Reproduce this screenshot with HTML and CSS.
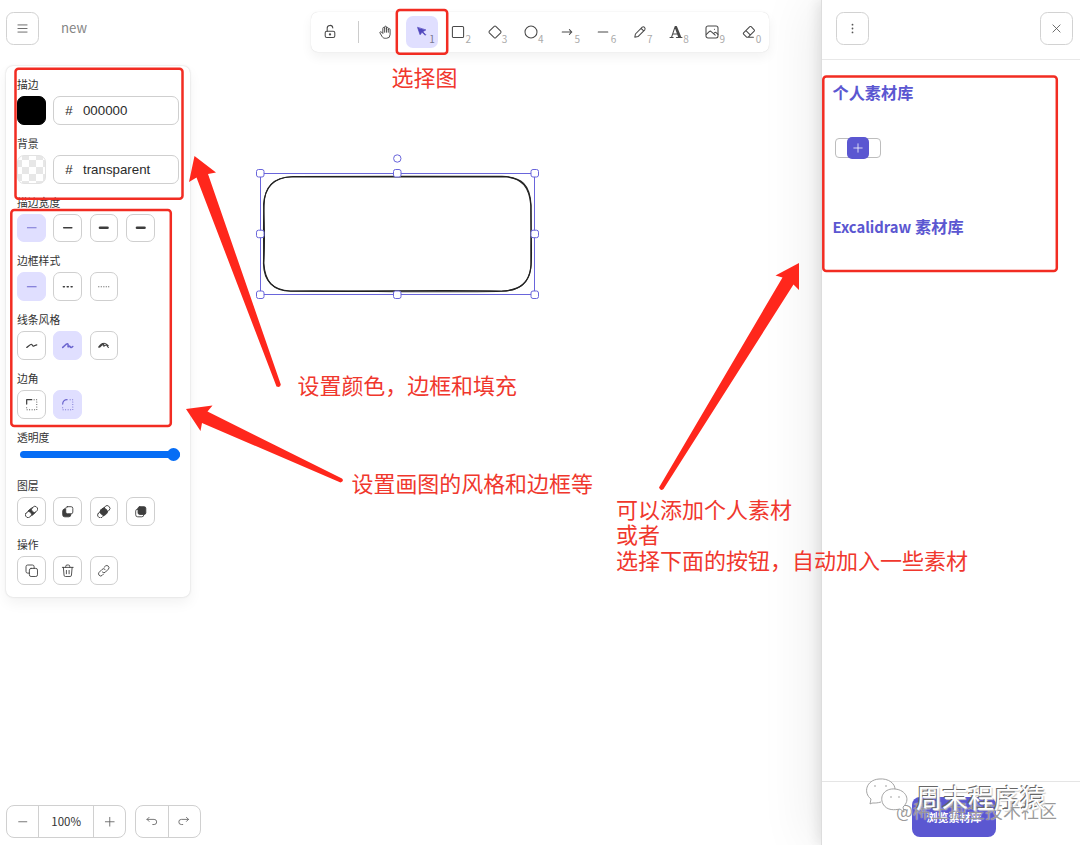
FILE: index.html
```html
<!DOCTYPE html>
<html lang="zh-CN">
<head>
<meta charset="utf-8">
<title>Excalidraw</title>
<link rel="stylesheet" href="styles.css">
</head>
<body>
<div class="app">
  <main class="board">
    <header class="topbar">
      <button class="icon-btn"><svg class="i" viewBox="0 0 20 20"><path d="M3 4.500h14M3 10h14M3 15.500h14"/></svg></button>
      <span class="doc-name">new</span>
      <nav class="toolbar">
        <button class="tool"><svg class="i" viewBox="0 0 20 20"><rect x="4" y="9" width="12" height="8" rx="2"/><path d="M6.500 9V5.500a3.500 3.500 0 0 1 7-.5"/><circle cx="10" cy="13" r=".8"/></svg></button>
        <i class="divider"></i>
        <button class="tool"><svg class="i hand" viewBox="0 0 24 24"><path d="M8 13V5.500a1.500 1.500 0 0 1 3 0V12M11 5.500v-2a1.500 1.500 0 1 1 3 0V12M14 5.500a1.500 1.500 0 0 1 3 0V12"/><path d="M17 7.500a1.500 1.500 0 0 1 3 0V16a6 6 0 0 1-6 6h-2c-2.500 0-4-1-5.300-3L3.300 13.200a1.500 1.500 0 0 1 2.500-1.600L8 14"/></svg></button>
        <button class="tool active"><svg class="i solid" viewBox="0 0 22 22"><path d="M3 3l4.500 13 3.500-4.500 6 5.500 1-1-5.500-5.500L17.500 7.500z"/></svg><small>1</small></button>
        <button class="tool"><svg class="i" viewBox="0 0 20 20"><rect x="3" y="3" width="14" height="14" rx="1.500"/></svg><small>2</small></button>
        <button class="tool"><svg class="i" viewBox="0 0 20 20"><path d="M9 2.900a1.500 1.500 0 0 1 2 0L17.100 9a1.500 1.500 0 0 1 0 2L11 17.100a1.500 1.500 0 0 1-2 0L2.900 11a1.500 1.500 0 0 1 0-2z"/></svg><small>3</small></button>
        <button class="tool"><svg class="i" viewBox="0 0 20 20"><circle cx="10" cy="10" r="7.500"/></svg><small>4</small></button>
        <button class="tool"><svg class="i" viewBox="0 0 20 20"><path d="M4 10h12M13 7l3 3-3 3"/></svg><small>5</small></button>
        <button class="tool"><svg class="i" viewBox="0 0 20 20"><path d="M4 10h12"/></svg><small>6</small></button>
        <button class="tool"><svg class="i" viewBox="0 0 20 20"><path d="M3.500 16.500l.8-4 8.500-8.500c2-1.500 4.500 1 3.200 3.200L7.500 15.700zM11.500 5.500l3 3"/></svg><small>7</small></button>
        <button class="tool"><svg class="i" viewBox="0 0 20 20"><path d="M2.500 17h4M10.500 17h7M4.500 16.500L9 3h1.500l5.500 13.500M6.500 12.500h6M9 4l4.500 12.500M10.300 4l4.500 12.500"/></svg><small>8</small></button>
        <button class="tool"><svg class="i" viewBox="0 0 20 20"><rect x="2.500" y="2.500" width="15" height="15" rx="2.500"/><path d="M3 13l3.500-3.500c1-.8 1.800-.8 2.500 0l5 4.500M12 12l1-1c1-.8 1.800-.8 2.500 0l2 2M13 6.500h.2"/></svg><small>9</small></button>
        <button class="tool"><svg class="i" viewBox="0 0 20 20"><path d="M15.500 16.500H7L3.200 12.800a1.200 1.200 0 0 1 0-1.600l7.800-7.800a1.200 1.200 0 0 1 1.700 0L16.500 7.300a1.200 1.200 0 0 1 0 1.600L9 16.500M6.500 8.500l5 5"/></svg><small>0</small></button>
      </nav>
    </header>

    <aside class="panel">
      <section><h3>描边</h3><div class="row"><span class="swatch black"></span><label class="field"><b>#</b>000000</label></div></section>
      <section><h3>背景</h3><div class="row"><span class="swatch clear"></span><label class="field"><b>#</b>transparent</label></div></section>
      <section><h3>描边宽度</h3><div class="row">
        <button class="opt on"><svg class="i" viewBox="0 0 20 20"><path d="M3.500 10h13"/></svg></button>
        <button class="opt"><svg class="i w2" viewBox="0 0 20 20"><path d="M4 10h12"/></svg></button>
        <button class="opt"><svg class="i w3" viewBox="0 0 20 20"><path d="M4.500 10h11"/></svg></button>
        <button class="opt"><svg class="i w3" viewBox="0 0 20 20"><path d="M4.500 10h11"/></svg></button></div></section>
      <section><h3>边框样式</h3><div class="row">
        <button class="opt on"><svg class="i w15" viewBox="0 0 20 20"><path d="M3.500 10h13"/></svg></button>
        <button class="opt"><svg class="i w2" viewBox="0 0 20 20"><path d="M3.500 10h1.500M9.200 10h1.600M15 10h1.500"/></svg></button>
        <button class="opt"><svg class="i" viewBox="0 0 20 20"><path d="M2.500 10h.3M6.200 10h.3M10 10h.3M13.600 10h.3M17.200 10h.3"/></svg></button></div></section>
      <section><h3>线条风格</h3><div class="row">
        <button class="opt"><svg class="i w15" viewBox="0 0 20 20"><path d="M2.500 12.500C6 10 8.500 7 10 8s.5 3 2.500 2.500 3-1.500 5-1.800"/></svg></button>
        <button class="opt on"><svg class="i w2" viewBox="0 0 20 20"><path d="M2.500 12.500C5 10.500 8.500 6 10 7.200S9.500 12 11 11.500s1-1.500 2-1 .5 2.500 2 2.200 1.500-1.500 2.500-1.700"/></svg></button>
        <button class="opt"><svg class="i w15" viewBox="0 0 20 20"><path d="M2.500 12C5 8.500 8 6 9.500 7.200S9 11.500 10.500 10.500 12.500 8.500 14 9s1 3 3 3.500M4 12C7 9 9 8 10 9M7.500 7.500c3-2.500 5.500-1.500 9 2.500"/></svg></button></div></section>
      <section><h3>边角</h3><div class="row">
        <button class="opt"><svg class="i" viewBox="0 0 20 20"><path class="bold" d="M2.500 9V2.500H10"/><path class="dots" d="M13.500 2.500h4v15H2.500V12"/></svg></button>
        <button class="opt on"><svg class="i" viewBox="0 0 20 20"><path class="bold" d="M2.500 9C2.500 5 5 2.500 9 2.500"/><path class="dots" d="M13.500 2.500h4v15H2.500V12"/></svg></button></div></section>
      <section class="opacity"><h3>透明度</h3><div class="slider"></div></section>
      <section><h3>图层</h3><div class="row">
        <button class="opt"><svg class="i" viewBox="0 0 20 20"><g transform="rotate(-45 10 10)"><rect class="fill" x="5" y="5.500" width="10" height="9" rx="3"/><rect class="paper" x="-1" y="5.500" width="9" height="8" rx="3.500"/><rect class="paper" x="11" y="6.500" width="9" height="8" rx="3.500"/></g></svg></button>
        <button class="opt"><svg class="i" viewBox="0 0 20 20"><rect class="fill" x="2.500" y="6" width="12" height="11.500" rx="3"/><rect class="paper" x="7" y="2.500" width="10.500" height="10.500" rx="2.500"/></svg></button>
        <button class="opt"><svg class="i" viewBox="0 0 20 20"><g transform="rotate(-45 10 10)"><rect class="paper" x="-1" y="6" width="9" height="8" rx="3.500"/><rect class="paper" x="12" y="6" width="9" height="8" rx="3.500"/><rect class="fill" x="5" y="5" width="10" height="10" rx="4"/></g></svg></button>
        <button class="opt"><svg class="i" viewBox="0 0 20 20"><rect class="paper" x="2.500" y="6" width="12" height="11.500" rx="3"/><rect class="fill" x="6" y="2.500" width="11.500" height="11.500" rx="2.500"/></svg></button></div></section>
      <section><h3>操作</h3><div class="row">
        <button class="opt"><svg class="i" viewBox="0 0 20 20"><rect x="6.500" y="6.500" width="12" height="12" rx="2.500"/><path d="M6.500 13.500H4A2.500 2.500 0 0 1 1.500 11V4A2.500 2.500 0 0 1 4 1.500h7A2.500 2.500 0 0 1 13.500 4v2.500"/></svg></button>
        <button class="opt"><svg class="i" viewBox="0 0 20 20"><path d="M2 5h16M3.500 5l1 11.500A2 2 0 0 0 6.500 18.500h7a2 2 0 0 0 2-2L16.500 5M7 5V3.500a2 2 0 0 1 2-2h2a2 2 0 0 1 2 2V5M8 9.500v5M12 9.500v5"/></svg></button>
        <button class="opt"><svg class="i" viewBox="0 0 20 20"><path d="M8 12a3.200 3.200 0 0 0 4.500 0l4.500-4.500A3.200 3.200 0 0 0 12.500 3L10.500 5M12 8a3.200 3.200 0 0 0-4.500 0L3 12.500A3.200 3.200 0 0 0 7.500 17L9.500 15"/></svg></button></div></section>
    </aside>

    <footer class="bottombar">
      <div class="group zoom"><button><svg class="i" viewBox="0 0 20 20"><path d="M4 10h12"/></svg></button><span>100%</span><button><svg class="i" viewBox="0 0 20 20"><path d="M3.500 10h13M10 3.500v13"/></svg></button></div>
      <div class="group"><button><svg class="i" viewBox="0 0 20 20"><path d="M6 9.500L3 6.500l3-3M3 6.500h10.500a3.800 3.800 0 0 1 0 7.600H11.500"/></svg></button><button><svg class="i" viewBox="0 0 20 20"><path d="M14 9.500L17 6.500l-3-3M17 6.500H6.500a3.800 3.800 0 0 0 0 7.600H8.500"/></svg></button></div>
    </footer>
  </main>

  <aside class="library">
    <header class="lib-head">
      <button class="icon-btn"><svg class="i" viewBox="0 0 20 20"><path class="w25" d="M10 4v.1M10 10v.1M10 16v.1"/></svg></button>
      <button class="icon-btn"><svg class="i" viewBox="0 0 20 20"><path d="M4.500 4.500l11 11M15.500 4.500l-11 11"/></svg></button>
    </header>
    <div class="lib-body">
      <h2>个人素材库</h2>
      <div class="lib-item"><button class="add"><svg class="i" viewBox="0 0 20 20"><path d="M4 10h12M10 4v12"/></svg></button></div>
      <h2><span class="latin">Excalidraw</span> 素材库</h2>
    </div>
    <footer class="lib-foot"><button class="browse">浏览素材库</button></footer>
  </aside>

  <svg class="canvas" width="1080" height="845" viewBox="0 0 1080 845">
    <g class="sketch">
      <path d="M293 176.500C350 175.800 440 177 502 176.300C522 177 530 185 531 205C530.500 225 532 243 531.300 262C531 282 520 291 502 291C430 290 360 291.500 290 291C272 290 264 281 263.500 264C264 242 263 225 264 206C264 187 274 177 293 176.500Z"/>
      <path d="M291 177C360 176.700 430 176.300 505 176.800C522 178 529.500 187 530.900 206C531.500 225 530.500 245 531 265C530 282 521 290 502 291.200C440 293 350 290.500 291 291.200C273 291 265 282 263.800 263C265 242 264.500 225 263.600 204C265 187 274 177.500 291 177Z"/>
    </g>
    <g class="selection">
      <rect x="260.500" y="173.500" width="274" height="121"/>
      <rect x="256.500" y="169.500" width="7.500" height="7.500" rx="2"/><rect x="393.500" y="169.500" width="7.500" height="7.500" rx="2"/><rect x="531" y="169.500" width="7.500" height="7.500" rx="2"/>
      <rect x="256.500" y="230.200" width="7.500" height="7.500" rx="2"/><rect x="531" y="230.200" width="7.500" height="7.500" rx="2"/>
      <rect x="256.500" y="291" width="7.500" height="7.500" rx="2"/><rect x="393.500" y="291" width="7.500" height="7.500" rx="2"/><rect x="531" y="291" width="7.500" height="7.500" rx="2"/>
      <circle cx="397.300" cy="158.500" r="3.700"/>
    </g>
    <g class="frames">
      <rect x="396.800" y="10" width="50.400" height="43.800" rx="3"/>
      <rect x="15.500" y="68.800" width="167" height="130" rx="3"/>
      <rect x="11.300" y="210" width="159.500" height="216" rx="3"/>
      <rect x="823.300" y="76.500" width="233.500" height="194.500" rx="3"/>
    </g>
    <g class="arrows">
      <path d="M194.500 156L216 172.500L208 174L280.800 384.500Q280.500 388 276.500 386.500L196.500 177.500L189 182Z"/>
      <path d="M186 409L212.500 405.500L207.500 411.500L342 478.500Q344.500 481 340.500 482.500L202 423L200.500 431Z"/>
      <path d="M799 263L799 290L793.500 284.500L663.500 489Q660.500 491.500 659 487.500L782.500 277.500L775.500 275.500Z"/>
    </g>
  </svg>
  <p class="note n1">选择图</p>
  <p class="note n2">设置颜色，边框和填充</p>
  <p class="note n3">设置画图的风格和边框等</p>
  <p class="note n4">可以添加个人素材<br>或者<br>选择下面的按钮，自动加入一些素材</p>

  <div class="mark community">@稀土掘金技术社区</div>
  <div class="mark account"><svg viewBox="0 0 44 38"><path d="M16 25C9 27 8 25 5 27L6 22C-2 16 1 3 14 2C24 1 30 7 30 12"/><path d="M30 12C20 11 14 19 18 27C22 34 30 33 35 32L39 35L38 30C46 23 41 13 30 12ZM9 9h2M20 9h2M25 20h2M33 20h2"/></svg><span>周末程序猿</span></div>
</div>
</body>
</html>
```
FILE: styles.css
```css
* { box-sizing: border-box; }
body { margin: 0; background: #fff; color: #3d3d3d; font-family: "Noto Sans CJK SC", "Noto Sans", sans-serif; }
button { margin: 0; padding: 0; border: 0; background: none; color: inherit; font: inherit; display: flex; align-items: center; justify-content: center; }
h2, h3, p { margin: 0; }

.app { position: relative; display: grid; grid-template-columns: 821px 259px; width: 1080px; height: 845px; overflow: hidden; }
.i { width: 14.5px; height: 14.5px; fill: none; stroke: currentColor; stroke-width: 1.3; stroke-linecap: round; stroke-linejoin: round; display: block; flex: none; }
.solid { fill: currentColor; }
.w15 { stroke-width: 1.7; }
.w2 { stroke-width: 2.3; }
.w25 { stroke-width: 2.7; }
.w3 { stroke-width: 4; }
.bold { stroke-width: 1.8; }
.dots { stroke-width: 1.6; stroke-dasharray: .1 3.6; }
.fill { fill: currentColor; }
.paper { fill: #fff; }

.board { display: flex; flex-direction: column; padding: 12px 0 7px 6px; }
.topbar { display: flex; align-items: flex-start; flex: none; height: 54px; }
.icon-btn { flex: none; width: 33px; height: 32.5px; border: 1px solid #d2d2d2; border-radius: 7.5px; background: #fff; color: #555; }
.icon-btn .i { width: 13px; height: 13px; }
.doc-name { flex: none; width: 271.5px; padding-left: 22px; color: #858585; font-size: 13.2px; line-height: 32px; }
.toolbar { display: flex; flex: none; align-items: center; gap: 3.65px; width: 458.5px; height: 40px; padding: 0 3.6px; border-radius: 7px; background: #fff; box-shadow: 0 0 1px #ccc, 0 5px 12px #0000000e; }
.tool { position: relative; width: 32.65px; height: 32.5px; border-radius: 7px; color: #484848; }
.tool .i { width: 16px; height: 16px; }
.divider { width: 1px; height: 22px; margin: 0 7.2px; background: #ccc; }
.tool small { position: absolute; right: 3.5px; bottom: 3.500px; color: #aaa; font-size: 10px; line-height: 12px; }
.tool .hand { width: 14.5px; height: 14.5px; stroke-width: 1.6; }
.active { background: #e0dfff; color: #4f46bd; }
.tool.active .i { width: 12px; height: 12px; }
.active small { color: #77758f; }

.panel { flex: none; width: 183.5px; height: 531px; padding: 11px; border-radius: 7px; box-shadow: 0 0 2px #ccc, 0 6px 14px #0000000e; background: #fff; }
.panel section { height: 58.8px; }
.panel h3 { height: 19px; color: #333; font-size: 10.8px; font-weight: 400; line-height: 14px; }
.row { display: flex; gap: 7.4px; }
.opt, .swatch { width: 28.9px; height: 28.9px; border: 1px solid #cfcfcf; border-radius: 7px; flex: none; }
.opt .i { width: 13.5px; height: 13.5px; }
.on { border-color: #e0dfff; background: #e0dfff; color: #6b65cf; }
.black { border-color: #000; background: #000; }
.clear { border-color: #e2e2e2; background: repeating-conic-gradient(#e7e7e7 0 25%, #fff 0 50%) 4px 4px / 14px 14px; }
.field { display: flex; width: 126px; height: 28.9px; padding-left: 11px; border: 1px solid #cfcfcf; border-radius: 7px; color: #2b2b2b; font: 13.3px/27px "Liberation Sans", sans-serif; }
.field b { width: 17.7px; font-weight: 400; }
.panel .opacity { height: 48.3px; }
.slider { position: relative; width: 160px; height: 7px; top: 2px; margin-left: 3px; border-radius: 4px; background: #066df5; }
.slider::after { content: ""; position: absolute; right: 0; top: -3.2px; width: 13.5px; height: 13.5px; border-radius: 50%; background: #066df5; }

.bottombar { display: flex; gap: 9px; margin-top: auto; }
.group { display: flex; height: 33px; border: 1px solid #d0d0d0; border-radius: 8px; color: #666; }
.group > * { width: 31.5px; }
.group > * + * { width: 32px; border-left: 1px solid #d0d0d0; }
.group .i { width: 13.5px; height: 13.5px; }
.zoom { width: 120px; }
.zoom span { width: 55px; color: #333; font-size: 11.500px; line-height: 30px; text-align: center; }

.library { display: flex; flex-direction: column; border-left: 1px solid #ddd; background: #fff; box-shadow: -3px 0 12px #00000018, -12px 0 50px #00000012; }
.lib-head { display: flex; justify-content: space-between; height: 60px; padding: 12px 7px 0 14px; border-bottom: 1px solid #e8e8e8; }
.lib-body { flex: 1; padding: 20px 10.500px; }
.lib-body h2 { color: #5b57d1; font-size: 16.2px; font-weight: 700; line-height: 24px; }
.latin { font-size: 14.8px; }
.lib-item { display: flex; align-items: center; justify-content: center; width: 46px; height: 20px; margin: 33.500px 0 56.500px 2.500px; border: 1px solid #bdbdbd; border-radius: 4px; }
.add { width: 22px; height: 22px; border-radius: 5px; background: #5b57d1; color: #fff; flex: none; }
.add .i { width: 14px; height: 14px; stroke-width: 1.1; }
.lib-foot { display: flex; justify-content: center; height: 64px; padding: 15px 0 8px 6px; border-top: 1px solid #e5e5e5; }
.browse { width: 84px; border-radius: 8px; background: #5b57d1; color: #fff; font-size: 11px; font-weight: 700; }

.canvas { position: absolute; left: 0; top: 0; pointer-events: none; }
.sketch { fill: none; stroke: #222; stroke-width: 1.15; }
.selection { fill: #fff; stroke: #6965db; stroke-width: 1; }
.selection > rect:first-child { fill: none; }
.frames { fill: none; stroke: #f22c22; stroke-width: 2.5; }
.arrows { fill: #ff271c; stroke: none; }
.note { position: absolute; color: #f0372d; font-size: 21.95px; line-height: 25.5px; white-space: nowrap; font-weight: 400; }
.n1 { left: 391.5px; top: 63.5px; }
.n2 { left: 297.5px; top: 371.5px; }
.n3 { left: 351.5px; top: 469.5px; }
.n4 { left: 616px; top: 495.5px; font-size: 22px; }

.mark { position: absolute; white-space: nowrap; }
.community { left: 896px; top: 797px; color: #666666a8; font-size: 18px; line-height: 26px; text-shadow: 0 0 1px #fff; }
.account { left: 865px; top: 777px; display: flex; color: #fff; font-size: 26px; line-height: 39px; text-shadow: -1px -1px 0 #666, 1px 1px 1px #ccc; }
.account svg { width: 44px; height: 38px; margin-right: 7px; fill: #fff; stroke: #999; stroke-width: .9; }
```
